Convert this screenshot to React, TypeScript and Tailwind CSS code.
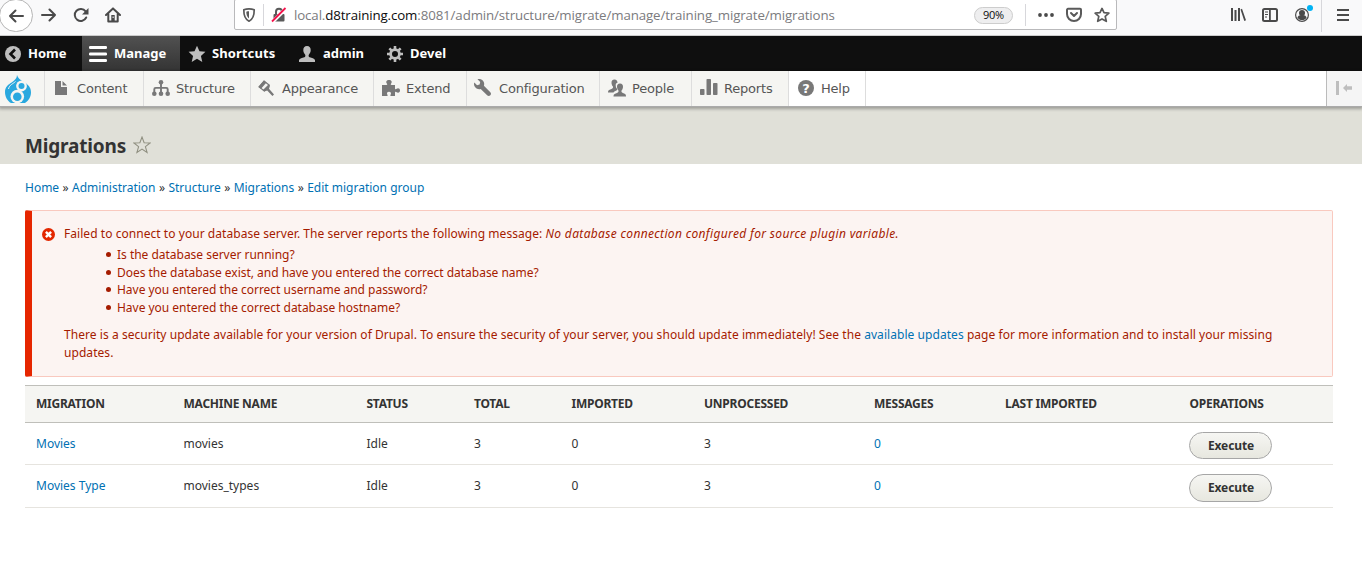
import type { ReactNode } from "react";

function Icon({ children, className = "" }: { children: ReactNode; className?: string }) {
  return (
    <svg viewBox="0 0 16 16" className={`h-4 w-4 shrink-0 fill-current ${className}`} aria-hidden="true">
      {children}
    </svg>
  );
}

const line = { fill: "none", stroke: "currentColor", strokeWidth: 2, strokeLinecap: "round", strokeLinejoin: "round" } as const;
const STAR = "M8 .6l2.2 5 5.3.5-4 3.6 1.2 5.4L8 12.3l-4.7 2.8 1.2-5.4-4-3.6 5.3-.5z";

function BrowserBar() {
  return (
    <div className="flex h-9 w-full items-start overflow-hidden border-b border-[#ccc] bg-[#f9f9fa] text-[#4a4a4a]">
      <div className="-ml-px -mt-px flex h-[33px] w-[34px] shrink-0 items-center justify-center rounded-full border border-[#b5b5b5] bg-white">
        <Icon>
          <path {...line} d="M15 8H2M7.500 2.500L2 8l5.500 5.500" />
        </Icon>
      </div>
      <div className="ml-[7px] mt-[7px] flex w-[194px] shrink-0 gap-4">
        <Icon>
          <path {...line} d="M2 8h13M9.500 2.500L15 8l-5.500 5.500" />
        </Icon>
        <Icon className="ml-px">
          <path {...line} d="M13.200 10.500a6 6 0 1 1-.6-6.200" />
          <path d="M15.500 1v6.500H9z" />
        </Icon>
        <Icon>
          <path {...line} d="M1 8l7-6.600L15 8M3.300 7v7.500h9.400V7" />
          <path d="M6.300 8h3.400v6H6.300z" />
          <path d="M7.600 9.500h1v1.500h-1z" fill="#fff" />
        </Icon>
      </div>
      <div className="-mt-px flex h-[31px] w-[883px] shrink-0 items-center rounded-[2px] border border-[#b9b9bb] bg-white">
        <Icon className="ml-[6px] text-[#5a5a5a]">
          <path {...line} strokeWidth={1.700} d="M8 1.800c-2 0-3.600.3-5.200 1C2.700 9 4 12.300 8 14.200c4-1.900 5.300-5.200 5.200-11.400C11.600 2.100 10 1.800 8 1.800z" />
          <path d="M8 4.200c-.9 0-1.800.1-2.700.5.100 3.300.8 5.300 2.700 6.700z" />
        </Icon>
        <div className="ml-[6px] h-[22px] w-px bg-[#d7d7db]" />
        <Icon className="ml-[7px] text-[#5a5a5a]">
          <path {...line} d="M5 7V4.700a3 3 0 0 1 6 0V7" />
          <rect x="2.500" y="7" width="11" height="7.500" rx="1" />
          <path d="M1 15.500L15 1.500" stroke="#fff" strokeWidth="3.500" />
          <path d="M1 14.500L14.500 1" stroke="#f5134c" strokeWidth="1.800" />
        </Icon>
        <div className="ml-[7px] mt-[3px] w-[680px] whitespace-nowrap font-['Open_Sans','Noto_Sans',sans-serif] text-[13.300px] tracking-[-0.120px] text-[#7b7b7e]">
          local.<span className="text-[#0c0c0d]">d8training.com</span>:8081/admin/structure/migrate/manage/training_migrate/migrations
        </div>
        <div className="mt-px flex h-[17px] w-[39px] items-center justify-center rounded-full border border-[#cdcdcd] bg-[#eeeeef] font-['Open_Sans','Noto_Sans',sans-serif] text-[11px] tracking-[-0.3px] text-[#0c0c0d]">
          90%
        </div>
        <div className="ml-3 h-[22px] w-px bg-[#d7d7db]" />
        <Icon className="ml-3">
          <circle cx="2" cy="8" r="1.900" />
          <circle cx="8" cy="8" r="1.900" />
          <circle cx="14" cy="8" r="1.900" />
        </Icon>
        <Icon className="ml-3 text-[#5a5a5a]">
          <path {...line} d="M2 1.800h12a1 1 0 0 1 1 1V7a7 7 0 0 1-14 0V2.800a1 1 0 0 1 1-1z" />
          <path {...line} d="M5 6l3 3 3-3" />
        </Icon>
        <Icon className="ml-3 text-[#5a5a5a]">
          <path {...line} strokeWidth={1.700} d="M8 1.400l2 4.300 4.900.5-3.700 3.200 1.100 4.900L8 11.900l-4.300 2.400 1.100-4.900L1.100 6.200l4.900-.5z" />
        </Icon>
      </div>
      <div className="ml-[113px] mt-[7px] flex">
        <Icon>
          <path d="M1 1h2v13H1zM4.500 3h2v11h-2zM8 1h2v13H8zM10.500 2.500l1.500-.7 4 11.400-1.700.8z" />
        </Icon>
        <Icon className="ml-4">
          <rect {...line} x="1" y="2" width="14" height="12" rx="1.500" />
          <path d="M7 2h1.800v12H7zM3 4.500h3v1H3zM3 7h3v1H3zM3 9.500h2v1H3z" />
        </Icon>
        <div className="relative ml-4 h-4 w-4">
          <Icon>
            <circle cx="8" cy="8" r="6.400" fill="none" stroke="currentColor" strokeWidth="1.200" />
            <circle cx="8" cy="6" r="3" />
            <path d="M8 8c-3 0-4.500 1.300-4.500 2.700C4.500 12.200 6 13 8 13s3.500-.8 4.500-2.300C12.500 9.300 11 8 8 8z" />
          </Icon>
          <div className="absolute -top-[2px] left-[13px] h-[6px] w-[6px] rounded-full bg-[#00b3f4]" />
        </div>
      </div>
      <div className="ml-[11px] h-8 w-px bg-[#d7d7db]" />
      <Icon className="ml-[13px] mt-[7px]">
        <path d="M2 2h12v2H2zM2 7h12v2H2zM2 12h12v2H2z" />
      </Icon>
    </div>
  );
}

function AdminBar() {
  return (
    <div className="flex h-[35px] w-full items-center bg-[#0f0f0f] font-['Noto_Sans','Open_Sans',sans-serif] text-[13px] font-bold text-white">
      <div className="flex h-full w-[82px] items-center">
        <Icon className="ml-[5px] text-[#bebebe]">
          <circle cx="8" cy="8" r="8" />
          <path d="M10 3.500L5.500 8l4.500 4.500" fill="none" stroke="#0f0f0f" strokeWidth="2.600" />
        </Icon>
        <span className="ml-[7px]">Home</span>
      </div>
      <div className="flex h-full w-[98px] items-center bg-linear-to-b from-[#515151] to-[#343434]">
        <svg viewBox="0 0 18 16" className="ml-[7px] h-4 w-[18px] fill-white">
          <rect width="18" height="3" rx="1.200" />
          <rect y="6.500" width="18" height="3" rx="1.200" />
          <rect y="13" width="18" height="3" rx="1.200" />
        </svg>
        <span className="ml-[7px]">Manage</span>
      </div>
      <div className="flex h-full w-[119px] items-center">
        <svg viewBox="0 0 16 16" className="ml-[8px] h-[18px] w-[18px] fill-[#bebebe]">
          <path d={STAR} />
        </svg>
        <span className="ml-[6px] tracking-[0.080px]">Shortcuts</span>
      </div>
      <div className="flex h-full w-[86px] items-center">
        <Icon className="text-[#bebebe]">
          <path d="M8 0C5.500 0 4.200 1.700 4.300 4.200c.1 2 .9 3.400 1.900 4.500.4 1.200.2 2.100-.9 2.600-2.200.8-4.500 1.100-5.300 2.800V16h16v-1.900c-.8-1.700-3.100-2-5.300-2.800-1.100-.5-1.300-1.400-.9-2.600 1-1.100 1.800-2.500 1.900-4.500C11.800 1.700 10.500 0 8 0z" />
        </Icon>
        <span className="ml-2">admin</span>
      </div>
      <div className="flex h-full items-center">
        <Icon className="ml-[2px] text-[#bebebe]">
          <circle cx="8" cy="8" r="4.400" fill="none" stroke="currentColor" strokeWidth="2.800" />
          <path d="M8 0v3M8 13v3M0 8h3M13 8h3M2.350 2.350l2.100 2.100M11.550 11.550l2.100 2.100M2.350 13.650l2.100-2.100M11.550 4.450l2.100-2.100" stroke="currentColor" strokeWidth="2.600" />
        </Icon>
        <span className="ml-[7px]">Devel</span>
      </div>
    </div>
  );
}

function Tab({ width, icon, label, gap = "ml-2", bg = "bg-[#f5f5f2]" }: { width: string; icon: ReactNode; label: string; gap?: string; bg?: string }) {
  return (
    <div className={`flex h-full shrink-0 items-center border-r border-[#ddd] pl-2 ${width} ${bg}`}>
      {icon}
      <span className={gap}>{label}</span>
    </div>
  );
}

function Tray() {
  return (
    <div className="relative flex h-9 w-full items-center border-b border-[#aaa] bg-white font-['DejaVu_Sans',sans-serif] text-[13px] tracking-[-0.200px] text-[#565656] shadow-[0_1px_3px_1px_rgba(0,0,0,0.3)]">
      <div className="flex h-full w-[45px] shrink-0 items-center border-r border-[#ddd] bg-[#f5f5f2] pl-[5px]">
        <svg viewBox="0 0 26 28" className="mt-px h-[28px] w-[26px]">
          <path d="M12 0c.8 3 3 4.700 6.500 6.700C23 9.500 26 12 26 17.300c0 4.500-2.300 8.500-6 10.700H6C2.300 26 0 21.500 0 17 0 12 3.200 9.500 6.600 7.500 10 5.400 12 3 12 0z" fill="#29a8df" />
          <circle cx="12.300" cy="21.500" r="6.800" fill="#f5f5f2" />
          <circle cx="16.500" cy="11" r="5.400" fill="#f5f5f2" />
          <circle cx="16.500" cy="11" r="3" fill="#29a8df" />
          <circle cx="12.300" cy="21.800" r="4.300" fill="#29a8df" />
          <path d="M10.500 6.500C8 9 4.500 9.500 3.500 14" fill="none" stroke="#f5f5f2" strokeWidth="1" />
        </svg>
      </div>
      <Tab
        width="w-[99px]"
        label="Content"
        icon={
          <Icon className="mb-[2px] text-[#787878]">
            <path d="M2 1h6v6h6v8H2zM9.500 1L14 5.500H9.500z" />
          </Icon>
        }
      />
      <Tab
        width="w-[107px]"
        label="Structure"
        gap="ml-[6px]"
        icon={
          <svg viewBox="0 0 18 16" className="mb-px h-4 w-[18px] shrink-0 fill-[#787878]">
            <circle cx="9" cy="2.300" r="2.300" />
            <path d="M9 4v10M2.300 13V9.300q0-1.400 1.400-1.400h10.600q1.400 0 1.400 1.400V13" fill="none" stroke="#787878" strokeWidth="1.900" />
            <circle cx="2.300" cy="13.700" r="2.300" />
            <circle cx="9" cy="13.700" r="2.300" />
            <circle cx="15.700" cy="13.700" r="2.300" />
          </svg>
        }
      />
      <Tab
        width="w-[123px]"
        label="Appearance"
        icon={
          <Icon className="-ml-px mb-[2px] text-[#787878]">
            <path d="M6 1L1 6.800 6.300 11 11.300 5.200z" fill="none" stroke="currentColor" strokeWidth="1.100" />
            <path d="M6 .5L.5 6.800l2.500 2L8.500 2.500zM10.500 4.500l1.500 1.200-1 3 5 5.800-1.600 1.500-5.200-5.600-2.900 1.200-1.600-1.300z" />
          </Icon>
        }
      />
      <Tab
        width="w-[93px]"
        label="Extend"
        gap="ml-[6px]"
        icon={
          <svg viewBox="0 0 18 16" className="mb-[2px] h-4 w-[18px] shrink-0 fill-[#787878]">
            <path d="M0 5h4.500c.8 0 1-.5.500-1.200C3.400 1.800 4.500 0 7 0s3.600 1.800 2 3.800C8.500 4.500 8.700 5 9.500 5H13v3.500c0 .8.500 1 1.200.500 2-1.500 3.800-.500 3.800 1.500s-1.800 3-3.800 1.500c-.7-.5-1.200-.3-1.200.5V16H9c-.8 0-.8-.7-.4-1.300C9.600 13 8.600 11.700 7 11.700S4.400 13 5.400 14.700c.4.600.4 1.300-.4 1.300H0z" />
          </svg>
        }
      />
      <Tab
        width="w-[133px]"
        label="Configuration"
        icon={
          <svg viewBox="0 0 15 15" className="-ml-px mb-[2px] h-[17px] w-[17px] shrink-0 fill-[#787878]">
            <path d="M14.416 11.586l-5.666-5.665c.15-.449.252-.921.252-1.421 0-2.485-2.016-4.500-4.502-4.500-.505 0-.981.102-1.434.255l2.431 2.431-.588 2.196-2.196.588-2.445-2.445c-.162.464-.268.956-.268 1.475 0 2.486 2.014 4.500 4.500 4.500.5 0 .972-.102 1.421-.251l5.667 5.665c.781.781 2.047.781 2.828 0s.781-2.047 0-2.828z" />
          </svg>
        }
      />
      <Tab
        width="w-[92px]"
        label="People"
        gap="ml-[6px]"
        icon={
          <svg viewBox="0 0 18 17" className="mb-px h-[18px] w-[18px] shrink-0 fill-[#787878]">
            <path d="M6.500 0C4.300 0 3.400 1.500 3.500 3.500c.1 1.600.7 2.700 1.500 3.600.3 1.300-.3 2-1.500 2.500C1.800 10.300 0 10.500 0 12.500V13h5.500c.6-1.200 2-1.600 3.300-2.200.5-.3.500-1 .2-1.500C7.800 8 7.300 5.500 8 4l1.500-.8C9.500 1.300 8.600 0 6.500 0z" />
            <path d="M12 4c-2.100 0-3.100 1.500-3 3.500.1 1.600.7 2.700 1.500 3.600.3 1.300-.3 2-1.500 2.500-1.700.7-3.500.9-3.500 2.900v.5H18v-.5c0-2-1.400-2.200-3.100-2.900-1.200-.5-1.700-1.200-1.400-2.500.8-.9 1.400-2 1.500-3.600.1-2-.9-3.500-3-3.500z" />
          </svg>
        }
      />
      <Tab
        width="w-[97px]"
        label="Reports"
        gap="ml-[6px]"
        icon={
          <svg viewBox="0 0 18 16" className="mb-[3px] h-4 w-[18px] shrink-0 fill-[#787878]">
            <rect x="0" y="10" width="4.500" height="6" rx=".8" />
            <rect x="6.500" y="0" width="4.500" height="16" rx=".8" />
            <rect x="13" y="4" width="4.500" height="12" rx=".8" />
          </svg>
        }
      />
      <Tab
        width="w-[77px]"
        label="Help"
        bg="bg-white"
        gap="ml-[7px]"
        icon={
          <span className="mb-px ml-[1px] flex h-4 w-4 items-center justify-center rounded-full bg-[#787878] text-[13px] font-bold leading-none text-white">?</span>
        }
      />
      <div className="ml-auto flex h-full w-9 items-center border-l border-[#bbb] bg-[#f5f5f5] pl-[9px] text-[#bebebe]">
        <Icon className="mb-px">
          <path d="M0 1h3v14H0zM7 8l4-4v2.300h5v3.400h-5V12z" />
        </Icon>
      </div>
    </div>
  );
}

function Link({ children }: { children: ReactNode }) {
  return <a className="text-[#0071b3]">{children}</a>;
}

const crumbs = ["Home", "Administration", "Structure", "Migrations", "Edit migration group"];
const questions = [
  "Is the database server running?",
  "Does the database exist, and have you entered the correct database name?",
  "Have you entered the correct username and password?",
  "Have you entered the correct database hostname?",
];

function Messages() {
  return (
    <div className="ml-[25px] mt-[13px] flex h-[167px] w-[1308px] rounded-[2px] border border-l-[7px] border-[#f9c9bf] border-l-[#e62600] bg-[#fcf4f2] text-[#a51b00]">
      <svg viewBox="0 0 16 16" className="ml-[10px] mt-[17px] h-[13px] w-[13px] shrink-0">
        <circle cx="8" cy="8" r="8" fill="#e32700" />
        <path d="M4.800 4.800l6.400 6.400M11.200 4.800l-6.400 6.400" stroke="#fff" strokeWidth="3" />
      </svg>
      <div className="ml-[9px] mt-[14px] w-[1232px] leading-[18px]">
        <p className="whitespace-nowrap tracking-[0.050px]">
          Failed to connect to your database server. The server reports the following message:{" "}
          <em className="tracking-[0.340px]">No database connection configured for source plugin variable.</em>
        </p>
        <ul className="ml-[42px] mt-[3px] leading-[17.600px] tracking-[-0.020px]">
          {questions.map((q) => (
            <li key={q} className="flex items-center">
              <span className="mr-[6px] h-[5px] w-[5px] rounded-full bg-[#a51b00]" />
              {q}
            </li>
          ))}
        </ul>
        <p className="mt-[10px] tracking-[0.055px]">
          There is a security update available for your version of Drupal. To ensure the security of your server, you should update immediately! See the{" "}
          <Link>available updates</Link> page for more information and to install your missing
          <br />
          updates.
        </p>
      </div>
    </div>
  );
}

const cols = "grid grid-cols-[147.500px_183px_107.500px_97.500px_132.500px_170px_131px_184.500px_1fr] pl-[11px]";
const heads = ["Migration", "Machine name", "Status", "Total", "Imported", "Unprocessed", "Messages", "Last imported", "Operations"];
const rows = [
  ["Movies", "movies", "Idle", "3", "0", "3", "0"],
  ["Movies Type", "movies_types", "Idle", "3", "0", "3", "0"],
];

function Table() {
  return (
    <div className="ml-[25px] mt-2 w-[1308px] text-[#333]">
      <div className={`${cols} h-[38px] items-center border-y border-[#bfbfba] bg-[#f5f5f2] font-bold uppercase tracking-[-0.240px]`}>
        {heads.map((h) => (
          <div key={h}>{h}</div>
        ))}
      </div>
      {rows.map((r, i) => (
        <div key={r[0]} className={`${cols} border-b border-[#e6e4df] leading-[18px] ${i === 0 ? "h-[42px]" : "h-[43px]"}`}>
          {r.map((c, j) => (
            <div key={j} className="mt-[12px]">
              {j === 0 || j === 6 ? <Link>{c}</Link> : c}
            </div>
          ))}
          <div />
          <button className={`-ml-[0.500px] mt-[9px] flex w-[83px] items-center justify-center rounded-full border border-[#a6a6a6] bg-linear-to-b from-[#f6f6f3] to-[#e7e7df] pl-px font-bold tracking-[-0.100px] ${i === 0 ? "h-[27px]" : "h-[28px]"}`}>
            Execute
          </button>
        </div>
      ))}
    </div>
  );
}

export default function App() {
  return (
    <div className="h-[564px] w-[1362px] overflow-hidden bg-white font-['Noto_Sans','Open_Sans',sans-serif] text-[12px]">
      <BrowserBar />
      <AdminBar />
      <Tray />
      <header className="flex h-[57px] items-start bg-[#e0e0d8] pl-[25px] pt-[25px] text-[#333]">
        <h1 className="w-[101px] text-[19px] font-bold leading-[28px] tracking-[-0.180px]">Migrations</h1>
        <svg viewBox="0 0 17 17" className="ml-[7px] mt-[4px] h-[18px] w-[18px]">
          <path d="M8.500 1l2 5.300 5.700.2-4.500 3.500 1.600 5.500-4.800-3.200-4.800 3.200 1.600-5.500L.8 6.500l5.700-.2z" fill="none" stroke="#8f8f80" strokeWidth="1" />
        </svg>
      </header>
      <nav className="ml-[25px] mt-[15px] flex h-[18px] items-center gap-[3.400px] text-[#333]">
        {crumbs.map((c, i) => (
          <span key={c} className="flex gap-[3.400px]">
            {i > 0 && <span>»</span>}
            <Link>{c}</Link>
          </span>
        ))}
      </nav>
      <Messages />
      <Table />
    </div>
  );
}
